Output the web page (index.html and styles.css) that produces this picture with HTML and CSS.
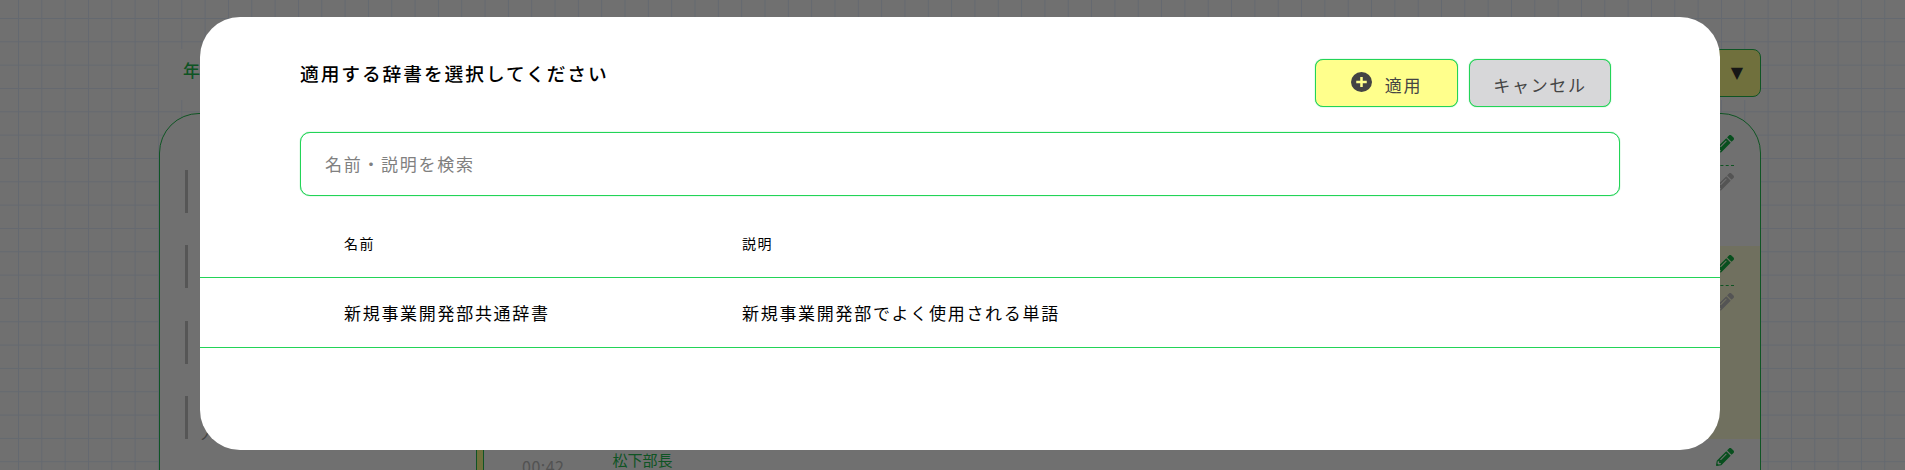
FILE: index.html
```html
<!DOCTYPE html>
<html lang="ja">
<head>
    <meta charset="UTF-8">
    <meta name="viewport" content="width=device-width, initial-scale=1.0">
    <title>辞書の適用</title>
    <link rel="stylesheet" href="styles.css">
</head>
<body>

<svg class="icon-defs" width="0" height="0" aria-hidden="true">
    <symbol id="pencil" viewBox="0 0 512 512">
        <path d="M497.9 142.1l-46.1 46.1c-4.7 4.7-12.3 4.7-17 0l-111-111c-4.7-4.7-4.7-12.3 0-17l46.1-46.1c18.7-18.7 49.1-18.7 67.9 0l60.1 60.1c18.8 18.7 18.8 49.1 0 67.9zM284.2 99.8L21.6 362.4.4 483.9c-2.9 16.4 11.4 30.6 27.8 27.8l121.5-21.3 262.6-262.6c4.7-4.7 4.7-12.3 0-17l-111-111c-4.8-4.7-12.4-4.7-17.1 0zM124.1 339.9c-5.5-5.5-5.5-14.3 0-19.8l154-154c5.5-5.5 14.3-5.5 19.8 0s5.5 14.3 0 19.8l-154 154c-5.5 5.5-14.3 5.5-19.8 0zM88 424h48v36.3l-64.5 11.3-31.1-31.1L51.7 376H88v48z"/>
    </symbol>
</svg>

<!-- 背面のページ -->
<div class="page">
    <div class="page-head">
        <span class="page-label">年度</span>
        <div class="dropdown">▼</div>
    </div>

    <div class="panel">
        <div class="side-list">
            <div class="side-item"></div>
            <div class="side-item"></div>
            <div class="side-item"></div>
            <div class="side-item"><span class="side-text">人</span></div>
        </div>

        <div class="timeline">
            <div class="block">
                <div class="edit-col">
                    <svg class="pencil pencil-green"><use href="#pencil"/></svg>
                    <div class="edit-divider"></div>
                    <svg class="pencil pencil-gray"><use href="#pencil"/></svg>
                </div>
            </div>
            <div class="block block-marked">
                <div class="edit-col">
                    <svg class="pencil pencil-green"><use href="#pencil"/></svg>
                    <div class="edit-divider"></div>
                    <svg class="pencil pencil-gray"><use href="#pencil"/></svg>
                </div>
            </div>
            <div class="block block-last">
                <div class="marker"></div>
                <span class="time">00:42</span>
                <span class="speaker">松下部長</span>
                <div class="edit-col">
                    <svg class="pencil pencil-green"><use href="#pencil"/></svg>
                </div>
            </div>
        </div>
    </div>
</div>

<!-- モーダル -->
<div class="overlay">
    <div class="modal">
        <div class="modal-head">
            <h2 class="modal-title">適用する辞書を選択してください</h2>
            <div class="modal-buttons">
                <button class="btn btn-apply">
                    <svg class="plus-icon" viewBox="0 0 20 20" preserveAspectRatio="none">
                        <circle cx="10" cy="10" r="10" fill="#444"/>
                        <path d="M10 5v10M5 10h10" stroke="#ffff8c" stroke-width="2.4"/>
                    </svg>
                    適用
                </button>
                <button class="btn btn-cancel">キャンセル</button>
            </div>
        </div>

        <input class="search" type="text" placeholder="名前・説明を検索">

        <table class="dict-table">
            <thead>
                <tr>
                    <th class="col-name">名前</th>
                    <th>説明</th>
                </tr>
            </thead>
            <tbody>
                <tr>
                    <td class="col-name">新規事業開発部共通辞書</td>
                    <td>新規事業開発部でよく使用される単語</td>
                </tr>
            </tbody>
        </table>
    </div>
</div>

</body>
</html>
```

FILE: styles.css
```css
/* 基本 */
html, body {
    height: 470px;
    margin: 0;
    overflow: hidden;
}

body {
    position: relative;
    font-family: "Noto Sans CJK JP", "Noto Sans", sans-serif;
    color: #000;
    background-color: #fff;
    background-image:
        linear-gradient(to right, #e4efff 1.4px, transparent 1.4px),
        linear-gradient(to bottom, #e4efff 1.4px, transparent 1.4px);
    background-size: 23.33px 23.33px;
    background-position: 18px 18px;
}

.icon-defs {
    position: absolute;
}

/* 背面のページ */
.page {
    margin-left: 159px;
    width: 1602px;
    padding-top: 49px;
}

.page-head {
    display: flex;
    justify-content: space-between;
    height: 51px;
    padding-left: 24px;
    background-color: #fff;
}

.page-label {
    padding-top: 8px;
    font-size: 17px;
    font-weight: 500;
    line-height: 25px;
    color: #22c050;
}

.dropdown {
    box-sizing: border-box;
    width: 200px;
    height: 48px;
    padding-right: 17px;
    border: 1px solid #22c050;
    border-radius: 8px;
    background-color: #ffff8c;
    color: #333;
    font-family: "DejaVu Sans", sans-serif;
    font-size: 16px;
    line-height: 46px;
    text-align: right;
}

.panel {
    display: flex;
    height: 500px;
    margin-top: 13px;
    border: 1px solid #22c050;
    border-radius: 40px 40px 0 0;
    background-color: #fff;
}

.side-list {
    display: flex;
    flex-direction: column;
    gap: 32.3px;
    width: 316px;
    padding: 56px 0 0 25px;
    box-sizing: border-box;
}

.side-item {
    position: relative;
    height: 43px;
    border-left: 3px solid #c4c4c4;
}

.side-text {
    position: absolute;
    left: 13px;
    top: 26px;
    font-size: 16px;
    line-height: 20px;
    color: #999;
}

.timeline {
    flex: 1;
    padding-top: 12px;
}

.block {
    display: flex;
    justify-content: flex-end;
    box-sizing: border-box;
    height: 120px;
    padding-right: 26px;
}

.block-marked {
    height: 193px;
    background-color: #ffffd8;
}

.block-last {
    height: 100px;
}

.marker {
    box-sizing: border-box;
    width: 8px;
    border-left: 1px solid #22c050;
    border-right: 1px solid #22c050;
    background-color: #ffff8c;
}

.time {
    margin: 15px 0 0 38px;
    font-size: 16px;
    line-height: 24px;
    letter-spacing: 0.5px;
    color: #bbb;
}

.speaker {
    margin: 10px 0 0 48px;
    font-size: 15px;
    line-height: 22px;
    color: #22c050;
}

.edit-col {
    margin-left: auto;
    width: 40px;
    padding-top: 9px;
    text-align: right;
}

.pencil {
    display: block;
    width: 18px;
    height: 18px;
    margin-left: auto;
}

.pencil-green {
    fill: #13b544;
}

.pencil-gray {
    fill: #c0c0c0;
}

.edit-divider {
    margin: 12px 0 7px;
    border-top: 1px dashed #22c050;
}

/* モーダル */
.overlay {
    position: absolute;
    top: 0;
    right: 0;
    bottom: 0;
    left: 0;
    background-color: rgba(0, 0, 0, 0.56);
}

.modal {
    position: absolute;
    top: 17px;
    left: 200px;
    width: 1520px;
    height: 433px;
    border-radius: 40px;
    background-color: #fff;
}

.modal-head {
    display: flex;
    justify-content: space-between;
    padding: 42px 109px 0 100px;
}

.modal-title {
    margin: 1px 0 0;
    font-size: 18.72px;
    font-weight: 500;
    line-height: 25px;
    letter-spacing: 1.95px;
}

.modal-buttons {
    display: flex;
    gap: 11px;
}

.btn {
    display: flex;
    align-items: center;
    justify-content: center;
    box-sizing: border-box;
    height: 48px;
    padding: 2px 0 0;
    border: 1px solid #22d457;
    border-radius: 8px;
    box-shadow: 0 0 1px #22d457;
    color: #444;
    font-family: inherit;
    font-size: 17px;
    letter-spacing: 0.1em;
}

.btn-apply {
    gap: 13px;
    width: 143px;
    background-color: #ffff8c;
}

.btn-cancel {
    width: 142px;
    background-color: #d7d7d9;
}

.plus-icon {
    width: 21px;
    height: 20px;
    margin-top: -5px;
}

.search {
    display: block;
    box-sizing: border-box;
    width: 1320px;
    height: 64px;
    margin: 25px 0 0 100px;
    padding: 0 24px 2px;
    border: 1px solid #22d457;
    border-radius: 10px;
    box-shadow: 0 0 1px #22d457;
    outline: none;
    font-family: inherit;
    font-size: 17px;
    letter-spacing: 0.1em;
}

.search::placeholder {
    color: #808080;
}

.dict-table {
    width: 100%;
    border-collapse: collapse;
    table-layout: fixed;
}

.dict-table th {
    box-sizing: border-box;
    height: 81px;
    padding: 14px 0 0;
    border-bottom: 1px solid #22d457;
    font-size: 14px;
    font-weight: 400;
    letter-spacing: 0.1em;
    text-align: left;
}

.dict-table td {
    height: 69px;
    padding: 0;
    border-bottom: 1px solid #22d457;
    font-size: 17px;
    letter-spacing: 0.1em;
}

.dict-table .col-name {
    box-sizing: border-box;
    width: 542px;
    padding-left: 144px;
}
```
